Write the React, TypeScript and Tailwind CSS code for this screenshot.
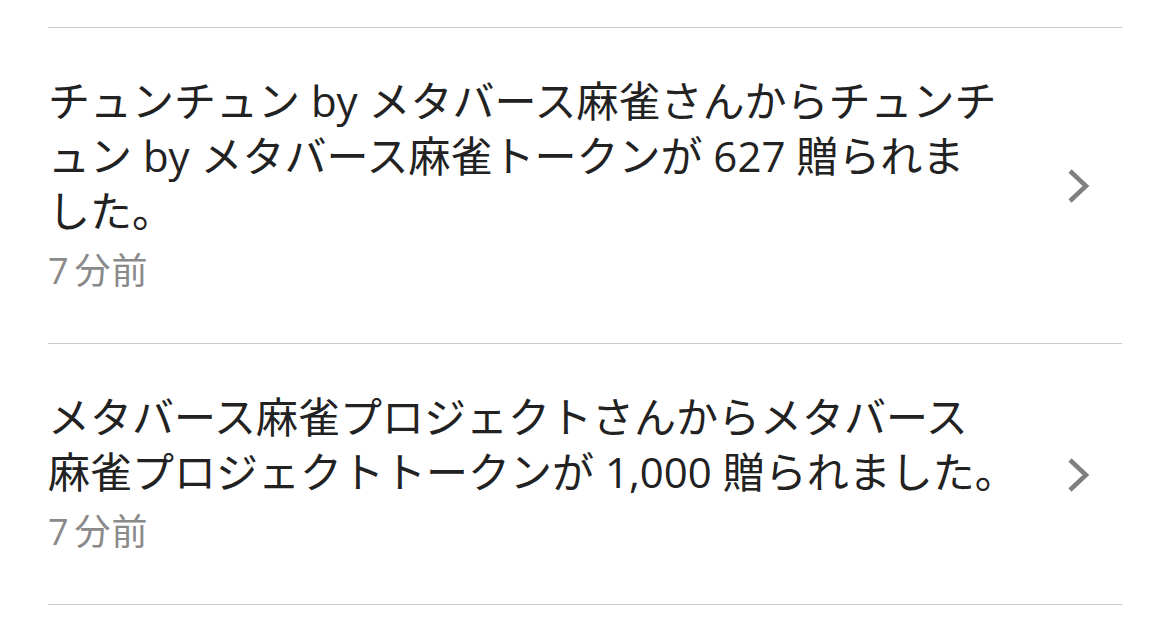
import React from 'react';

interface Notice {
  id: number;
  lines: string[];
  time: string;
}

// wrapped the same way the app wraps them
const notices: Notice[] = [
  {
    id: 1,
    lines: ['チュンチュン by メタバース麻雀さんからチュンチ', 'ュン by メタバース麻雀トークンが 627 贈られま', 'した。'],
    time: '分前',
  },
  {
    id: 2,
    lines: ['メタバース麻雀プロジェクトさんからメタバース', '麻雀プロジェクトトークンが 1,000 贈られました。'],
    time: '分前',
  },
];

const Chevron = () => (
  <svg width="23" height="36" viewBox="0 0 23 36" fill="none" className="shrink-0 mt-[6px]">
    <path d="M3 3 L19 18 L3 33" stroke="#7f7f7f" strokeWidth="4.5" strokeLinejoin="miter" />
  </svg>
);

export default function App() {
  return (
    <div
      className="min-h-[644px] w-full bg-white pt-[27px]"
      style={{ fontFamily: '"Open Sans", "Noto Sans CJK JP", sans-serif' }}
    >
      <div className="mx-[48px] border-t border-[#c8c8c8]">
        {notices.map(n => (
          <div key={n.id} className="flex items-center border-b border-[#c8c8c8] pt-[45px] pb-[50px] pr-[32px]">
            <div className="flex-1 pr-[40px]">
              <p className="text-[42px] leading-[55px] text-[#222222] whitespace-nowrap">
                {n.lines.map((l, i) => (
                  <React.Fragment key={i}>
                    {i > 0 && <br />}
                    {l}
                  </React.Fragment>
                ))}
              </p>
              <p className="mt-[10px] text-[36px] leading-[45px] text-[#8a8a8a] tracking-[1px]">
                <span className="mr-[5px]">7</span>
                {n.time}
              </p>
            </div>
            <Chevron />
          </div>
        ))}
      </div>
    </div>
  );
}
